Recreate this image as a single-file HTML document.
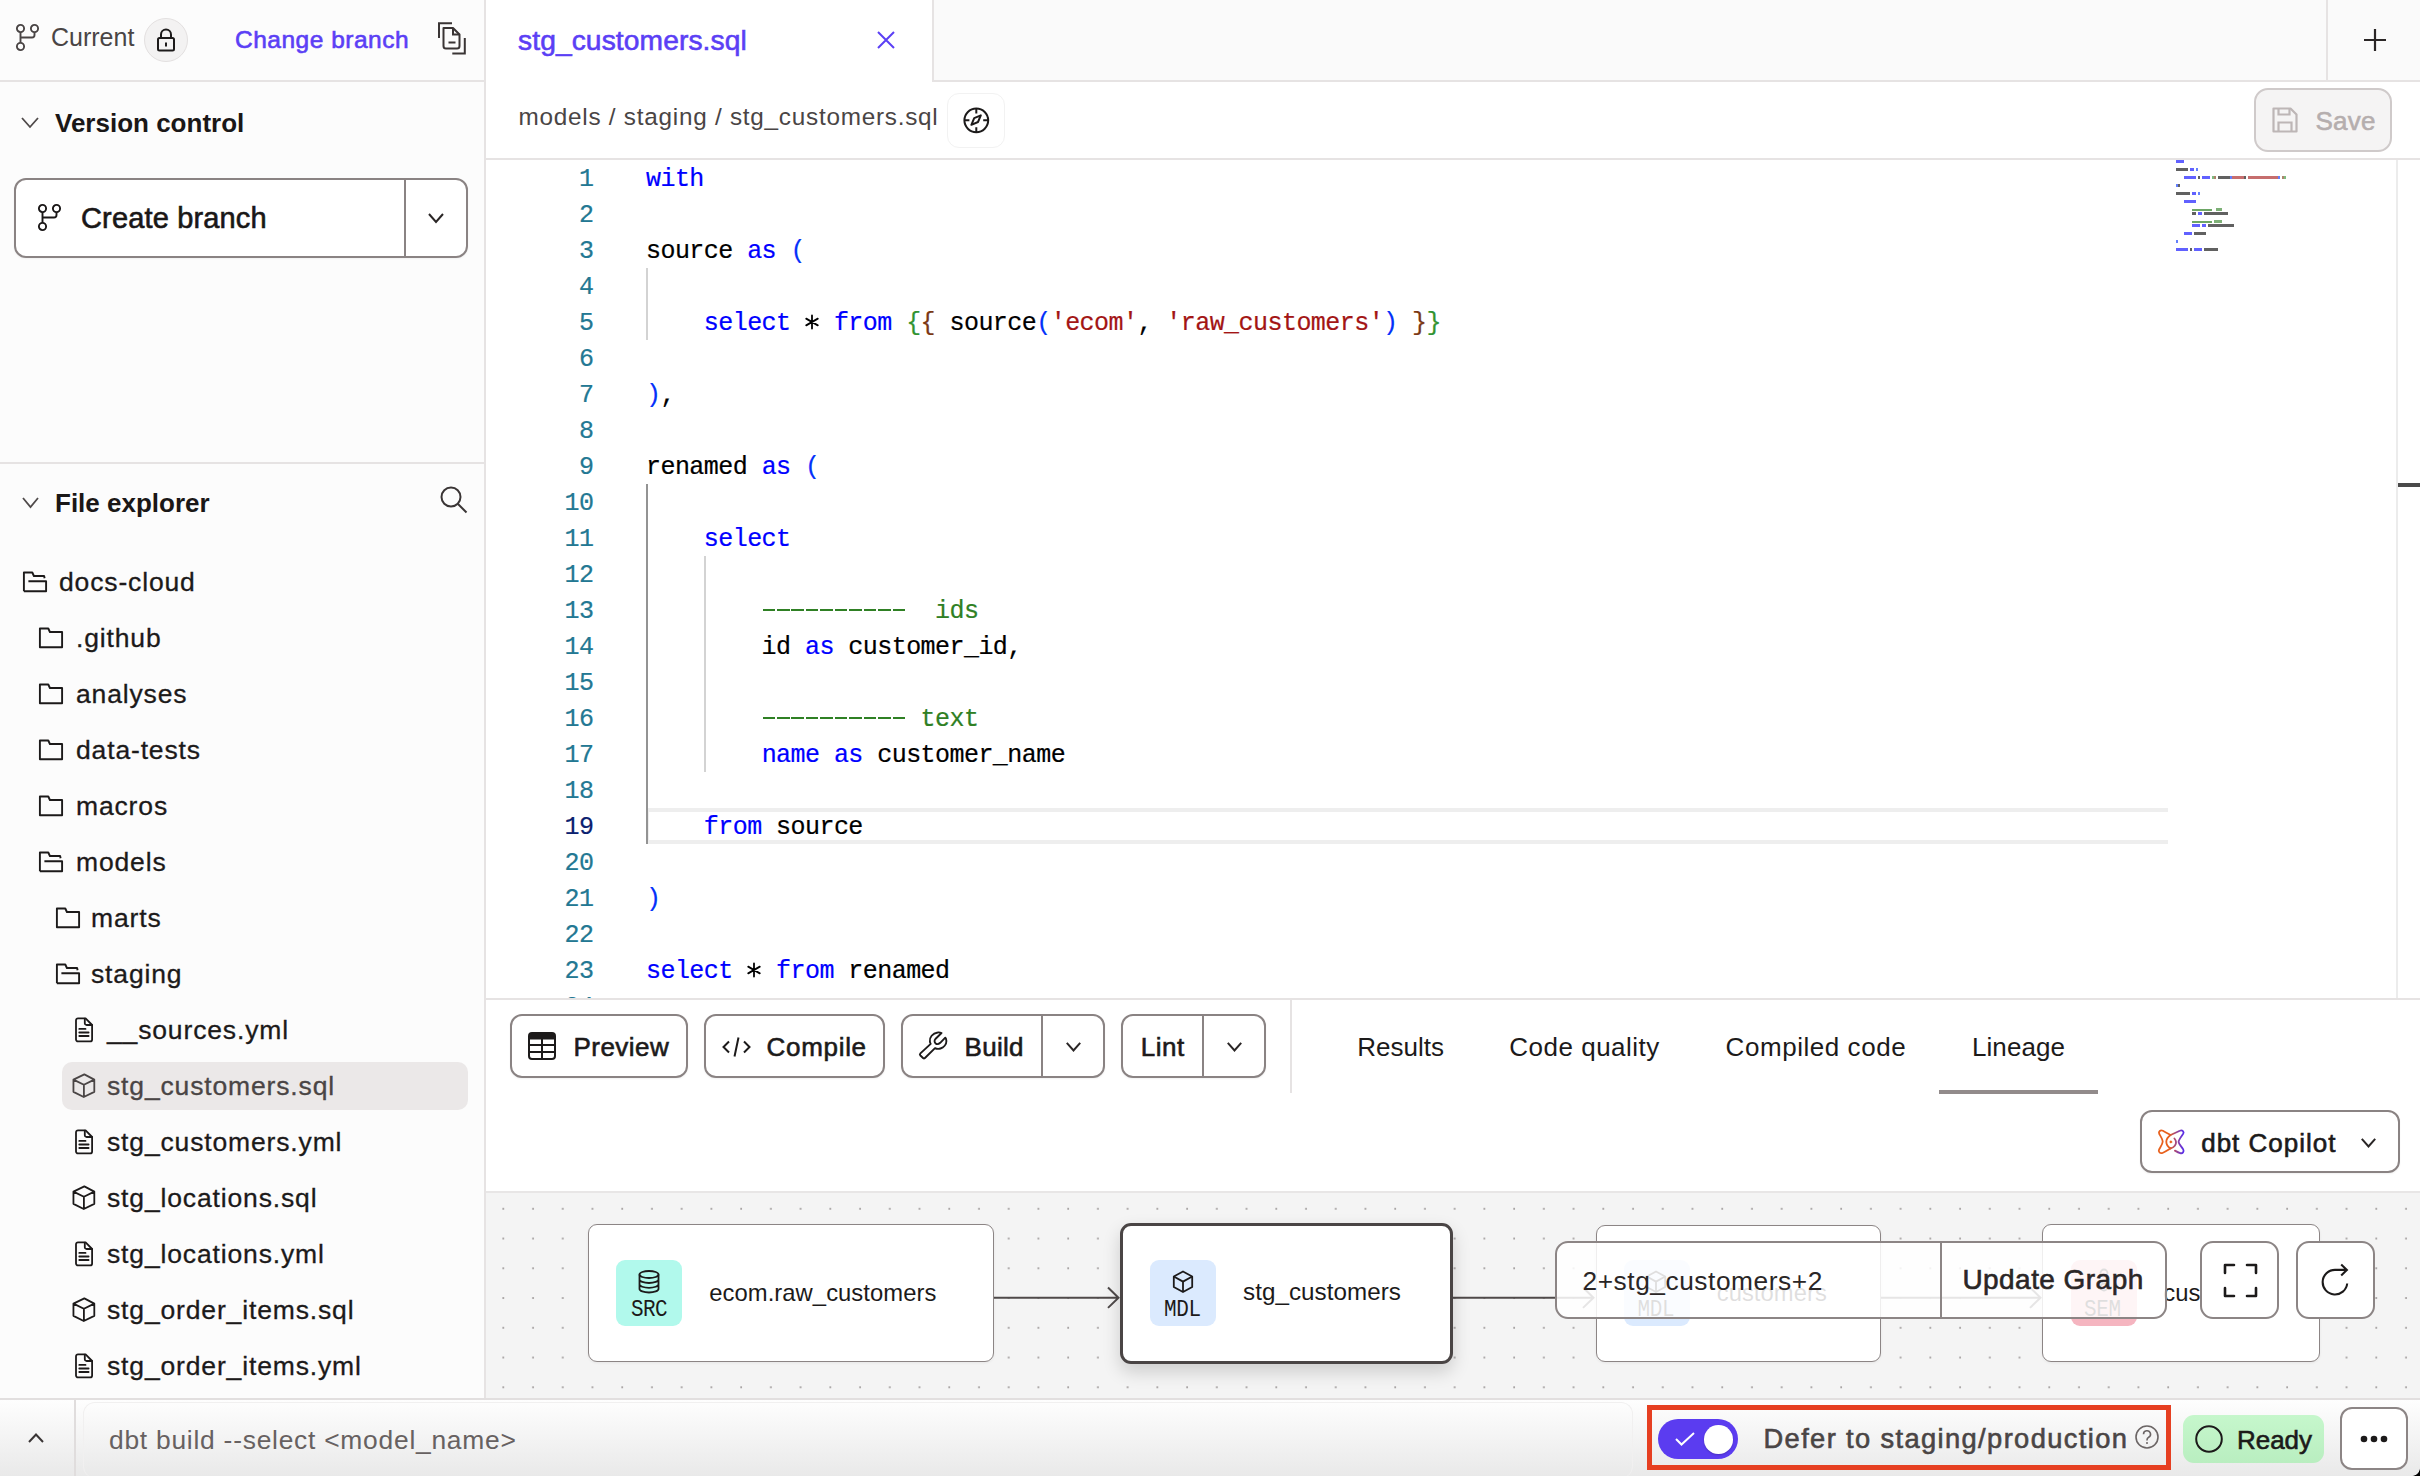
<!DOCTYPE html>
<html><head><meta charset="utf-8">
<style>
*{box-sizing:border-box;margin:0;padding:0}
html,body{width:2420px;height:1476px;overflow:hidden;background:#fff;font-family:"Liberation Sans",sans-serif;color:#1c1a1a}
.a{position:absolute}
.t{position:absolute;white-space:nowrap;line-height:1}
.med{-webkit-text-stroke:0.6px currentColor}
svg{position:absolute;overflow:visible}
.mono{font-family:"Liberation Mono",monospace}
</style></head><body>
<div class="a" style="left:0px;top:0px;width:484px;height:1398px;background:#fcfcfc"></div>
<div class="a" style="left:484px;top:0px;width:2px;height:1398px;background:#e6e3e3"></div>
<div class="a" style="left:0px;top:80px;width:484px;height:2px;background:#e6e3e3"></div>
<svg style="left:16px;top:24px;" width="24" height="28" viewBox="0 0 24 28" fill="none"><circle cx="4.5" cy="4.5" r="3.6" stroke="#4a4545" stroke-width="1.9"/><circle cx="18.5" cy="4.5" r="3.6" stroke="#4a4545" stroke-width="1.9"/><circle cx="4.5" cy="22.5" r="3.6" stroke="#4a4545" stroke-width="1.9"/><path d="M4.5 8.1V18.9M18.5 8.1V11a2.5 2.5 0 0 1-2.5 2.5H4.5" stroke="#4a4545" stroke-width="1.9"/></svg>
<div class="t" style="left:51.00px;top:25.34px;font-size:25px;color:#4a4545;">Current</div>
<div class="a" style="left:144px;top:18px;width:44px;height:44px;border-radius:50%;background:#f3f2f2;border:1.5px solid #e3e0e0"></div>
<svg style="left:157px;top:28px;" width="18" height="24" viewBox="0 0 18 24" fill="none"><path d="M4 10V6.5a5 5 0 0 1 10 0V10" stroke="#1c1a1a" stroke-width="2"/><rect x="1" y="10" width="16" height="12.5" rx="1.5" stroke="#1c1a1a" stroke-width="2"/><path d="M9 14.5v4" stroke="#1c1a1a" stroke-width="2"/></svg>
<div class="t med" style="left:235.00px;top:28.26px;font-size:24.5px;color:#5b3ff5;letter-spacing:0.5px;">Change branch</div>
<svg style="left:438px;top:22px;" width="30" height="34" viewBox="0 0 30 34" fill="none"><path d="M1 16V1.2h13" stroke="#3a3535" stroke-width="2"/><path d="M5.5 6h9.5l6.5 6.5V24a2.5 2.5 0 0 1-2.5 2.5H8a2.5 2.5 0 0 1-2.5-2.5z" stroke="#3a3535" stroke-width="2" stroke-linejoin="round"/><path d="M15 6v6.5h6.5" stroke="#3a3535" stroke-width="2"/><path d="M10.5 20.5h7" stroke="#3a3535" stroke-width="2"/><path d="M26.8 16v15.4H14.3" stroke="#3a3535" stroke-width="2"/></svg>
<svg style="left:21px;top:117px;" width="18" height="12" viewBox="0 0 18 12" fill="none"><path d="M1 1l8 9 8-9" stroke="#4f4a4a" stroke-width="1.8"/></svg>
<div class="t" style="left:55.00px;top:110.19px;font-size:26px;color:#1a1717;font-weight:bold;">Version control</div>
<div class="a" style="left:14px;top:178px;width:454px;height:80px;border:2px solid #8a8383;border-radius:12px;background:#fff;box-shadow:0 1px 2px rgba(0,0,0,0.05)"></div>
<div class="a" style="left:404px;top:179px;width:2px;height:78px;background:#8a8383"></div>
<svg style="left:38px;top:204px;" width="25" height="28" viewBox="0 0 25 28" fill="none"><circle cx="4.5" cy="4.5" r="3.6" stroke="#1a1717" stroke-width="1.9"/><circle cx="18.5" cy="4.5" r="3.6" stroke="#1a1717" stroke-width="1.9"/><circle cx="4.5" cy="22.5" r="3.6" stroke="#1a1717" stroke-width="1.9"/><path d="M4.5 8.1V18.9M18.5 8.1V11a2.5 2.5 0 0 1-2.5 2.5H4.5" stroke="#1a1717" stroke-width="1.9"/></svg>
<div class="t med" style="left:81.00px;top:203.65px;font-size:29px;color:#1a1717;letter-spacing:0.15px;">Create branch</div>
<svg style="left:428px;top:213px;" width="16" height="10" viewBox="0 0 16 10" fill="none"><path d="M1 1l7 8 7-8" stroke="#2a2626" stroke-width="2"/></svg>
<div class="a" style="left:0px;top:462px;width:484px;height:2px;background:#e6e3e3"></div>
<svg style="left:22px;top:497px;" width="17" height="11" viewBox="0 0 17 11" fill="none"><path d="M1 1l7.5 9 7.5-9" stroke="#4f4a4a" stroke-width="1.8"/></svg>
<div class="t" style="left:55.00px;top:490.39px;font-size:26px;color:#1a1717;font-weight:bold;">File explorer</div>
<svg style="left:440px;top:486px;" width="28" height="28" viewBox="0 0 28 28" fill="none"><circle cx="11" cy="11" r="9.5" stroke="#3a3535" stroke-width="2"/><path d="M18 18l8.5 8.5" stroke="#3a3535" stroke-width="2"/></svg>
<svg style="left:23px;top:571px;" width="24" height="22" viewBox="0 0 24 22" fill="none"><path d="M0.9 20.3V1.5H9.3L10.9 5H21.1L21.6 7.3" stroke="#1c1a1a" stroke-width="1.9" stroke-linejoin="round"/><path d="M5.4 10.2H23.1V20.3H0.9" stroke="#1c1a1a" stroke-width="1.9" stroke-linejoin="round"/></svg>
<div class="t" style="left:59.00px;top:569.37px;font-size:26.5px;color:#1c1a1a;letter-spacing:0.85px;-webkit-text-stroke:0.3px currentColor;">docs-cloud</div>
<svg style="left:39px;top:627px;" width="24" height="22" viewBox="0 0 24 22" fill="none"><path d="M0.9 1.5H9.3L10.9 5H23.1V20.3H0.9Z" stroke="#1c1a1a" stroke-width="1.9" stroke-linejoin="round"/></svg>
<div class="t" style="left:76.00px;top:625.37px;font-size:26.5px;color:#1c1a1a;letter-spacing:0.85px;-webkit-text-stroke:0.3px currentColor;">.github</div>
<svg style="left:39px;top:683px;" width="24" height="22" viewBox="0 0 24 22" fill="none"><path d="M0.9 1.5H9.3L10.9 5H23.1V20.3H0.9Z" stroke="#1c1a1a" stroke-width="1.9" stroke-linejoin="round"/></svg>
<div class="t" style="left:76.00px;top:681.37px;font-size:26.5px;color:#1c1a1a;letter-spacing:0.85px;-webkit-text-stroke:0.3px currentColor;">analyses</div>
<svg style="left:39px;top:739px;" width="24" height="22" viewBox="0 0 24 22" fill="none"><path d="M0.9 1.5H9.3L10.9 5H23.1V20.3H0.9Z" stroke="#1c1a1a" stroke-width="1.9" stroke-linejoin="round"/></svg>
<div class="t" style="left:76.00px;top:737.37px;font-size:26.5px;color:#1c1a1a;letter-spacing:0.85px;-webkit-text-stroke:0.3px currentColor;">data-tests</div>
<svg style="left:39px;top:795px;" width="24" height="22" viewBox="0 0 24 22" fill="none"><path d="M0.9 1.5H9.3L10.9 5H23.1V20.3H0.9Z" stroke="#1c1a1a" stroke-width="1.9" stroke-linejoin="round"/></svg>
<div class="t" style="left:76.00px;top:793.37px;font-size:26.5px;color:#1c1a1a;letter-spacing:0.85px;-webkit-text-stroke:0.3px currentColor;">macros</div>
<svg style="left:39px;top:851px;" width="24" height="22" viewBox="0 0 24 22" fill="none"><path d="M0.9 20.3V1.5H9.3L10.9 5H21.1L21.6 7.3" stroke="#1c1a1a" stroke-width="1.9" stroke-linejoin="round"/><path d="M5.4 10.2H23.1V20.3H0.9" stroke="#1c1a1a" stroke-width="1.9" stroke-linejoin="round"/></svg>
<div class="t" style="left:76.00px;top:849.37px;font-size:26.5px;color:#1c1a1a;letter-spacing:0.85px;-webkit-text-stroke:0.3px currentColor;">models</div>
<svg style="left:56px;top:907px;" width="24" height="22" viewBox="0 0 24 22" fill="none"><path d="M0.9 1.5H9.3L10.9 5H23.1V20.3H0.9Z" stroke="#1c1a1a" stroke-width="1.9" stroke-linejoin="round"/></svg>
<div class="t" style="left:91.00px;top:905.37px;font-size:26.5px;color:#1c1a1a;letter-spacing:0.85px;-webkit-text-stroke:0.3px currentColor;">marts</div>
<svg style="left:56px;top:963px;" width="24" height="22" viewBox="0 0 24 22" fill="none"><path d="M0.9 20.3V1.5H9.3L10.9 5H21.1L21.6 7.3" stroke="#1c1a1a" stroke-width="1.9" stroke-linejoin="round"/><path d="M5.4 10.2H23.1V20.3H0.9" stroke="#1c1a1a" stroke-width="1.9" stroke-linejoin="round"/></svg>
<div class="t" style="left:91.00px;top:961.37px;font-size:26.5px;color:#1c1a1a;letter-spacing:0.85px;-webkit-text-stroke:0.3px currentColor;">staging</div>
<svg style="left:75px;top:1017px;" width="19" height="26" viewBox="0 0 19 26" fill="none"><path d="M3 1.4h7.6l6.5 6.6v14.4a2 2 0 0 1-2 2H3a2 2 0 0 1-2-2V3.4a2 2 0 0 1 2-2z" stroke="#1c1a1a" stroke-width="1.8" stroke-linejoin="round"/><path d="M9.8 1.6v4.6a1.8 1.8 0 0 0 1.8 1.8h5.4M4.3 11.9h6.2M4.3 15.5h9.3M4.3 19h9.3" stroke="#1c1a1a" stroke-width="1.8" stroke-linecap="round"/></svg>
<div class="t" style="left:107.00px;top:1017.37px;font-size:26.5px;color:#1c1a1a;letter-spacing:0.85px;-webkit-text-stroke:0.3px currentColor;">__sources.yml</div>
<div class="a" style="left:62px;top:1062px;width:406px;height:48px;background:#ebe8e8;border-radius:10px"></div>
<svg style="left:72px;top:1073px;" width="24" height="26" viewBox="0 0 24 26" fill="none"><path d="M12.35 1.4L22.3 6.65V18.85L11.75 24L1.45 18.85V6.65Z M1.45 6.65L11.9 11.8L22.3 6.65 M11.9 11.8V24" stroke="#4a4545" stroke-width="1.8" stroke-linejoin="round"/></svg>
<div class="t" style="left:107.00px;top:1073.37px;font-size:26.5px;color:#4a4545;letter-spacing:0.85px;-webkit-text-stroke:0.3px currentColor;">stg_customers.sql</div>
<svg style="left:75px;top:1129px;" width="19" height="26" viewBox="0 0 19 26" fill="none"><path d="M3 1.4h7.6l6.5 6.6v14.4a2 2 0 0 1-2 2H3a2 2 0 0 1-2-2V3.4a2 2 0 0 1 2-2z" stroke="#1c1a1a" stroke-width="1.8" stroke-linejoin="round"/><path d="M9.8 1.6v4.6a1.8 1.8 0 0 0 1.8 1.8h5.4M4.3 11.9h6.2M4.3 15.5h9.3M4.3 19h9.3" stroke="#1c1a1a" stroke-width="1.8" stroke-linecap="round"/></svg>
<div class="t" style="left:107.00px;top:1129.37px;font-size:26.5px;color:#1c1a1a;letter-spacing:0.85px;-webkit-text-stroke:0.3px currentColor;">stg_customers.yml</div>
<svg style="left:72px;top:1185px;" width="24" height="26" viewBox="0 0 24 26" fill="none"><path d="M12.35 1.4L22.3 6.65V18.85L11.75 24L1.45 18.85V6.65Z M1.45 6.65L11.9 11.8L22.3 6.65 M11.9 11.8V24" stroke="#1c1a1a" stroke-width="1.8" stroke-linejoin="round"/></svg>
<div class="t" style="left:107.00px;top:1185.37px;font-size:26.5px;color:#1c1a1a;letter-spacing:0.85px;-webkit-text-stroke:0.3px currentColor;">stg_locations.sql</div>
<svg style="left:75px;top:1241px;" width="19" height="26" viewBox="0 0 19 26" fill="none"><path d="M3 1.4h7.6l6.5 6.6v14.4a2 2 0 0 1-2 2H3a2 2 0 0 1-2-2V3.4a2 2 0 0 1 2-2z" stroke="#1c1a1a" stroke-width="1.8" stroke-linejoin="round"/><path d="M9.8 1.6v4.6a1.8 1.8 0 0 0 1.8 1.8h5.4M4.3 11.9h6.2M4.3 15.5h9.3M4.3 19h9.3" stroke="#1c1a1a" stroke-width="1.8" stroke-linecap="round"/></svg>
<div class="t" style="left:107.00px;top:1241.37px;font-size:26.5px;color:#1c1a1a;letter-spacing:0.85px;-webkit-text-stroke:0.3px currentColor;">stg_locations.yml</div>
<svg style="left:72px;top:1297px;" width="24" height="26" viewBox="0 0 24 26" fill="none"><path d="M12.35 1.4L22.3 6.65V18.85L11.75 24L1.45 18.85V6.65Z M1.45 6.65L11.9 11.8L22.3 6.65 M11.9 11.8V24" stroke="#1c1a1a" stroke-width="1.8" stroke-linejoin="round"/></svg>
<div class="t" style="left:107.00px;top:1297.37px;font-size:26.5px;color:#1c1a1a;letter-spacing:0.85px;-webkit-text-stroke:0.3px currentColor;">stg_order_items.sql</div>
<svg style="left:75px;top:1353px;" width="19" height="26" viewBox="0 0 19 26" fill="none"><path d="M3 1.4h7.6l6.5 6.6v14.4a2 2 0 0 1-2 2H3a2 2 0 0 1-2-2V3.4a2 2 0 0 1 2-2z" stroke="#1c1a1a" stroke-width="1.8" stroke-linejoin="round"/><path d="M9.8 1.6v4.6a1.8 1.8 0 0 0 1.8 1.8h5.4M4.3 11.9h6.2M4.3 15.5h9.3M4.3 19h9.3" stroke="#1c1a1a" stroke-width="1.8" stroke-linecap="round"/></svg>
<div class="t" style="left:107.00px;top:1353.37px;font-size:26.5px;color:#1c1a1a;letter-spacing:0.85px;-webkit-text-stroke:0.3px currentColor;">stg_order_items.yml</div>
<div class="a" style="left:486px;top:0px;width:1934px;height:82px;background:#fafafa"></div>
<div class="a" style="left:486px;top:80px;width:1934px;height:2px;background:#e6e3e3"></div>
<div class="a" style="left:486px;top:0px;width:446px;height:82px;background:#fff"></div>
<div class="a" style="left:932px;top:0px;width:2px;height:82px;background:#e6e3e3"></div>
<div class="t med" style="left:518.00px;top:25.63px;font-size:28.2px;color:#5b3ff5;letter-spacing:0.1px;">stg_customers.sql</div>
<svg style="left:877px;top:31px;" width="18" height="18" viewBox="0 0 18 18" fill="none"><path d="M1 1l16 16M17 1L1 17" stroke="#5b3ff5" stroke-width="2"/></svg>
<div class="a" style="left:2326px;top:0px;width:2px;height:82px;background:#e6e3e3"></div>
<svg style="left:2363px;top:28px;" width="24" height="24" viewBox="0 0 24 24" fill="none"><path d="M12 1v22M1 12h22" stroke="#2a2626" stroke-width="2.2"/></svg>
<div class="a" style="left:486px;top:82px;width:1934px;height:76px;background:#fff"></div>
<div class="a" style="left:486px;top:158px;width:1934px;height:2px;background:#e6e3e3"></div>
<div class="t" style="left:518.50px;top:105.43px;font-size:24.3px;color:#4a4545;letter-spacing:0.75px;">models / staging / stg_customers.sql</div>
<div class="a" style="left:947px;top:93px;width:58px;height:55px;border:1px solid #f2f2f2;border-radius:12px;background:#fff"></div>
<svg style="left:962.5px;top:106.5px;" width="27" height="27" viewBox="0 0 27 27" fill="none"><circle cx="13.3" cy="13.35" r="11.9" stroke="#1c1a1a" stroke-width="2"/><path d="M13.3 1.5v5M13.3 20.2v5M1.4 13.35h5M20.2 13.35h5" stroke="#1c1a1a" stroke-width="2"/><path d="M17.8 8.4l-2.8 6.6-6.6 2.8 2.8-6.6z" stroke="#1c1a1a" stroke-width="2" stroke-linejoin="round"/></svg>
<div class="a" style="left:2254px;top:88px;width:138px;height:64px;background:#f5f4f4;border:2px solid #cfcaca;border-radius:14px"></div>
<svg style="left:2272px;top:107px;" width="26" height="26" viewBox="0 0 26 26" fill="none"><path d="M1.5 1.5h17l6 6v17h-23z" stroke="#bdb6b6" stroke-width="2.2" stroke-linejoin="round"/><path d="M6.5 1.5v6h11v-6M6.5 24.5v-9h13v9" stroke="#bdb6b6" stroke-width="2.2"/></svg>
<div class="t med" style="left:2315.50px;top:107.99px;font-size:26px;color:#b5aeae;letter-spacing:0.2px;">Save</div>
<div class="a" style="left:486px;top:160px;width:1934px;height:838px;background:#fff;overflow:hidden"></div>
<div class="a" style="left:486px;top:998px;width:1934px;height:2px;background:#e6e3e3"></div>
<div class="a" style="left:646px;top:808px;width:1522px;height:36px;border:4px solid #eeeeee;border-left-width:3px;border-right:none"></div>
<div class="a" style="left:646px;top:268px;width:2px;height:72px;background:#d3d3d3"></div>
<div class="a" style="left:704px;top:556px;width:2px;height:216px;background:#d3d3d3"></div>
<div class="a" style="left:646px;top:484px;width:2px;height:360px;background:#939393"></div>
<div class="a" style="left:0;top:0;width:2420px;height:998px;overflow:hidden"><div class="t" style="left:579.05px;top:166.84px;font-size:25px;color:#237893;letter-spacing:-0.55px;font-family:'Liberation Mono',monospace;-webkit-text-stroke:0.2px currentColor;">1</div>
<div class="t" style="left:646.00px;top:166.84px;font-size:25px;color:#000;letter-spacing:-0.55px;font-family:'Liberation Mono',monospace;-webkit-text-stroke:0.2px currentColor;"><span style="color:#0000ff">with</span></div>
<div class="t" style="left:579.05px;top:202.84px;font-size:25px;color:#237893;letter-spacing:-0.55px;font-family:'Liberation Mono',monospace;-webkit-text-stroke:0.2px currentColor;">2</div>
<div class="t" style="left:579.05px;top:238.84px;font-size:25px;color:#237893;letter-spacing:-0.55px;font-family:'Liberation Mono',monospace;-webkit-text-stroke:0.2px currentColor;">3</div>
<div class="t" style="left:646.00px;top:238.84px;font-size:25px;color:#000;letter-spacing:-0.55px;font-family:'Liberation Mono',monospace;-webkit-text-stroke:0.2px currentColor;"><span style="color:#000000">source&nbsp;</span><span style="color:#0000ff">as</span><span style="color:#000000">&nbsp;</span><span style="color:#0431fa">(</span></div>
<div class="t" style="left:579.05px;top:274.84px;font-size:25px;color:#237893;letter-spacing:-0.55px;font-family:'Liberation Mono',monospace;-webkit-text-stroke:0.2px currentColor;">4</div>
<div class="t" style="left:579.05px;top:310.84px;font-size:25px;color:#237893;letter-spacing:-0.55px;font-family:'Liberation Mono',monospace;-webkit-text-stroke:0.2px currentColor;">5</div>
<div class="t" style="left:646.00px;top:310.84px;font-size:25px;color:#000;letter-spacing:-0.55px;font-family:'Liberation Mono',monospace;-webkit-text-stroke:0.2px currentColor;"><span style="color:#000000">&nbsp;&nbsp;&nbsp;&nbsp;</span><span style="color:#0000ff">select</span><span style="color:#000000">&nbsp;&nbsp;&nbsp;</span><span style="color:#0000ff">from</span><span style="color:#000000">&nbsp;</span><span style="color:#319331">{</span><span style="color:#7b3814">{</span><span style="color:#000000">&nbsp;source</span><span style="color:#0431fa">(</span><span style="color:#a31515">'ecom'</span><span style="color:#000000">,&nbsp;</span><span style="color:#a31515">'raw_customers'</span><span style="color:#0431fa">)</span><span style="color:#000000">&nbsp;</span><span style="color:#7b3814">}</span><span style="color:#319331">}</span></div>
<div class="t" style="left:579.05px;top:346.84px;font-size:25px;color:#237893;letter-spacing:-0.55px;font-family:'Liberation Mono',monospace;-webkit-text-stroke:0.2px currentColor;">6</div>
<div class="t" style="left:579.05px;top:382.84px;font-size:25px;color:#237893;letter-spacing:-0.55px;font-family:'Liberation Mono',monospace;-webkit-text-stroke:0.2px currentColor;">7</div>
<div class="t" style="left:646.00px;top:382.84px;font-size:25px;color:#000;letter-spacing:-0.55px;font-family:'Liberation Mono',monospace;-webkit-text-stroke:0.2px currentColor;"><span style="color:#0431fa">)</span><span style="color:#000000">,</span></div>
<div class="t" style="left:579.05px;top:418.84px;font-size:25px;color:#237893;letter-spacing:-0.55px;font-family:'Liberation Mono',monospace;-webkit-text-stroke:0.2px currentColor;">8</div>
<div class="t" style="left:579.05px;top:454.84px;font-size:25px;color:#237893;letter-spacing:-0.55px;font-family:'Liberation Mono',monospace;-webkit-text-stroke:0.2px currentColor;">9</div>
<div class="t" style="left:646.00px;top:454.84px;font-size:25px;color:#000;letter-spacing:-0.55px;font-family:'Liberation Mono',monospace;-webkit-text-stroke:0.2px currentColor;"><span style="color:#000000">renamed&nbsp;</span><span style="color:#0000ff">as</span><span style="color:#000000">&nbsp;</span><span style="color:#0431fa">(</span></div>
<div class="t" style="left:564.60px;top:490.84px;font-size:25px;color:#237893;letter-spacing:-0.55px;font-family:'Liberation Mono',monospace;-webkit-text-stroke:0.2px currentColor;">10</div>
<div class="t" style="left:564.60px;top:526.84px;font-size:25px;color:#237893;letter-spacing:-0.55px;font-family:'Liberation Mono',monospace;-webkit-text-stroke:0.2px currentColor;">11</div>
<div class="t" style="left:646.00px;top:526.84px;font-size:25px;color:#000;letter-spacing:-0.55px;font-family:'Liberation Mono',monospace;-webkit-text-stroke:0.2px currentColor;"><span style="color:#000000">&nbsp;&nbsp;&nbsp;&nbsp;</span><span style="color:#0000ff">select</span></div>
<div class="t" style="left:564.60px;top:562.84px;font-size:25px;color:#237893;letter-spacing:-0.55px;font-family:'Liberation Mono',monospace;-webkit-text-stroke:0.2px currentColor;">12</div>
<div class="t" style="left:564.60px;top:598.84px;font-size:25px;color:#237893;letter-spacing:-0.55px;font-family:'Liberation Mono',monospace;-webkit-text-stroke:0.2px currentColor;">13</div>
<div class="t" style="left:646.00px;top:598.84px;font-size:25px;color:#000;letter-spacing:-0.55px;font-family:'Liberation Mono',monospace;-webkit-text-stroke:0.2px currentColor;"><span style="color:#000000">&nbsp;&nbsp;&nbsp;&nbsp;&nbsp;&nbsp;&nbsp;&nbsp;</span><span style="color:#2f8024">&nbsp;&nbsp;&nbsp;&nbsp;&nbsp;&nbsp;&nbsp;&nbsp;&nbsp;&nbsp;&nbsp;&nbsp;ids</span></div>
<div class="t" style="left:564.60px;top:634.84px;font-size:25px;color:#237893;letter-spacing:-0.55px;font-family:'Liberation Mono',monospace;-webkit-text-stroke:0.2px currentColor;">14</div>
<div class="t" style="left:646.00px;top:634.84px;font-size:25px;color:#000;letter-spacing:-0.55px;font-family:'Liberation Mono',monospace;-webkit-text-stroke:0.2px currentColor;"><span style="color:#000000">&nbsp;&nbsp;&nbsp;&nbsp;&nbsp;&nbsp;&nbsp;&nbsp;id&nbsp;</span><span style="color:#0000ff">as</span><span style="color:#000000">&nbsp;customer_id,</span></div>
<div class="t" style="left:564.60px;top:670.84px;font-size:25px;color:#237893;letter-spacing:-0.55px;font-family:'Liberation Mono',monospace;-webkit-text-stroke:0.2px currentColor;">15</div>
<div class="t" style="left:564.60px;top:706.84px;font-size:25px;color:#237893;letter-spacing:-0.55px;font-family:'Liberation Mono',monospace;-webkit-text-stroke:0.2px currentColor;">16</div>
<div class="t" style="left:646.00px;top:706.84px;font-size:25px;color:#000;letter-spacing:-0.55px;font-family:'Liberation Mono',monospace;-webkit-text-stroke:0.2px currentColor;"><span style="color:#000000">&nbsp;&nbsp;&nbsp;&nbsp;&nbsp;&nbsp;&nbsp;&nbsp;</span><span style="color:#2f8024">&nbsp;&nbsp;&nbsp;&nbsp;&nbsp;&nbsp;&nbsp;&nbsp;&nbsp;&nbsp;&nbsp;text</span></div>
<div class="t" style="left:564.60px;top:742.84px;font-size:25px;color:#237893;letter-spacing:-0.55px;font-family:'Liberation Mono',monospace;-webkit-text-stroke:0.2px currentColor;">17</div>
<div class="t" style="left:646.00px;top:742.84px;font-size:25px;color:#000;letter-spacing:-0.55px;font-family:'Liberation Mono',monospace;-webkit-text-stroke:0.2px currentColor;"><span style="color:#000000">&nbsp;&nbsp;&nbsp;&nbsp;&nbsp;&nbsp;&nbsp;&nbsp;</span><span style="color:#0000ff">name</span><span style="color:#000000">&nbsp;</span><span style="color:#0000ff">as</span><span style="color:#000000">&nbsp;customer_name</span></div>
<div class="t" style="left:564.60px;top:778.84px;font-size:25px;color:#237893;letter-spacing:-0.55px;font-family:'Liberation Mono',monospace;-webkit-text-stroke:0.2px currentColor;">18</div>
<div class="t" style="left:564.60px;top:814.84px;font-size:25px;color:#0b216f;letter-spacing:-0.55px;font-family:'Liberation Mono',monospace;-webkit-text-stroke:0.2px currentColor;">19</div>
<div class="t" style="left:646.00px;top:814.84px;font-size:25px;color:#000;letter-spacing:-0.55px;font-family:'Liberation Mono',monospace;-webkit-text-stroke:0.2px currentColor;"><span style="color:#000000">&nbsp;&nbsp;&nbsp;&nbsp;</span><span style="color:#0000ff">from</span><span style="color:#000000">&nbsp;source</span></div>
<div class="t" style="left:564.60px;top:850.84px;font-size:25px;color:#237893;letter-spacing:-0.55px;font-family:'Liberation Mono',monospace;-webkit-text-stroke:0.2px currentColor;">20</div>
<div class="t" style="left:564.60px;top:886.84px;font-size:25px;color:#237893;letter-spacing:-0.55px;font-family:'Liberation Mono',monospace;-webkit-text-stroke:0.2px currentColor;">21</div>
<div class="t" style="left:646.00px;top:886.84px;font-size:25px;color:#000;letter-spacing:-0.55px;font-family:'Liberation Mono',monospace;-webkit-text-stroke:0.2px currentColor;"><span style="color:#0431fa">)</span></div>
<div class="t" style="left:564.60px;top:922.84px;font-size:25px;color:#237893;letter-spacing:-0.55px;font-family:'Liberation Mono',monospace;-webkit-text-stroke:0.2px currentColor;">22</div>
<div class="t" style="left:564.60px;top:958.84px;font-size:25px;color:#237893;letter-spacing:-0.55px;font-family:'Liberation Mono',monospace;-webkit-text-stroke:0.2px currentColor;">23</div>
<div class="t" style="left:646.00px;top:958.84px;font-size:25px;color:#000;letter-spacing:-0.55px;font-family:'Liberation Mono',monospace;-webkit-text-stroke:0.2px currentColor;"><span style="color:#0000ff">select</span><span style="color:#000000">&nbsp;&nbsp;&nbsp;</span><span style="color:#0000ff">from</span><span style="color:#000000">&nbsp;renamed</span></div>
<div class="t" style="left:564.60px;top:994.84px;font-size:25px;color:#237893;letter-spacing:-0.55px;font-family:'Liberation Mono',monospace;-webkit-text-stroke:0.2px currentColor;">24</div>
</div>
<div class="a" style="left:762.5px;top:608.8px;width:12.6px;height:2.6px;background:#2f8024"></div>
<div class="a" style="left:776.95px;top:608.8px;width:12.6px;height:2.6px;background:#2f8024"></div>
<div class="a" style="left:791.4px;top:608.8px;width:12.6px;height:2.6px;background:#2f8024"></div>
<div class="a" style="left:805.85px;top:608.8px;width:12.6px;height:2.6px;background:#2f8024"></div>
<div class="a" style="left:820.3px;top:608.8px;width:12.6px;height:2.6px;background:#2f8024"></div>
<div class="a" style="left:834.75px;top:608.8px;width:12.6px;height:2.6px;background:#2f8024"></div>
<div class="a" style="left:849.2px;top:608.8px;width:12.6px;height:2.6px;background:#2f8024"></div>
<div class="a" style="left:863.65px;top:608.8px;width:12.6px;height:2.6px;background:#2f8024"></div>
<div class="a" style="left:878.1px;top:608.8px;width:12.6px;height:2.6px;background:#2f8024"></div>
<div class="a" style="left:892.55px;top:608.8px;width:12.6px;height:2.6px;background:#2f8024"></div>
<div class="a" style="left:762.5px;top:716.8px;width:12.6px;height:2.6px;background:#2f8024"></div>
<div class="a" style="left:776.95px;top:716.8px;width:12.6px;height:2.6px;background:#2f8024"></div>
<div class="a" style="left:791.4px;top:716.8px;width:12.6px;height:2.6px;background:#2f8024"></div>
<div class="a" style="left:805.85px;top:716.8px;width:12.6px;height:2.6px;background:#2f8024"></div>
<div class="a" style="left:820.3px;top:716.8px;width:12.6px;height:2.6px;background:#2f8024"></div>
<div class="a" style="left:834.75px;top:716.8px;width:12.6px;height:2.6px;background:#2f8024"></div>
<div class="a" style="left:849.2px;top:716.8px;width:12.6px;height:2.6px;background:#2f8024"></div>
<div class="a" style="left:863.65px;top:716.8px;width:12.6px;height:2.6px;background:#2f8024"></div>
<div class="a" style="left:878.1px;top:716.8px;width:12.6px;height:2.6px;background:#2f8024"></div>
<div class="a" style="left:892.55px;top:716.8px;width:12.6px;height:2.6px;background:#2f8024"></div>
<svg style="left:804.2px;top:314.2px;" width="16" height="16" viewBox="-8 -8 16 16" fill="none"><path d="M0 -6.6V6.6M-5.8 -3.35L5.8 3.35M-5.8 3.35L5.8 -3.35" stroke="#000" stroke-width="1.8" stroke-linecap="round"/></svg>
<svg style="left:746.4px;top:962.2px;" width="16" height="16" viewBox="-8 -8 16 16" fill="none"><path d="M0 -6.6V6.6M-5.8 -3.35L5.8 3.35M-5.8 3.35L5.8 -3.35" stroke="#000" stroke-width="1.8" stroke-linecap="round"/></svg>
<div class="a" style="left:2396px;top:160px;width:2px;height:838px;background:#ececec"></div>
<div class="a" style="left:2398px;top:483px;width:22px;height:4px;background:#4a4a4a"></div>
<div class="a" style="left:2176px;top:160px;width:8px;height:3.2px;background:#0000ff;opacity:0.62"></div><div class="a" style="left:2176px;top:168px;width:12px;height:3.2px;background:#000000;opacity:0.62"></div><div class="a" style="left:2190px;top:168px;width:4px;height:3.2px;background:#0000ff;opacity:0.62"></div><div class="a" style="left:2196px;top:168px;width:2px;height:3.2px;background:#0431fa;opacity:0.62"></div><div class="a" style="left:2184px;top:176px;width:12px;height:3.2px;background:#0000ff;opacity:0.62"></div><div class="a" style="left:2198px;top:176px;width:2px;height:3.2px;background:#000000;opacity:0.62"></div><div class="a" style="left:2202px;top:176px;width:8px;height:3.2px;background:#0000ff;opacity:0.62"></div><div class="a" style="left:2212px;top:176px;width:2px;height:3.2px;background:#319331;opacity:0.62"></div><div class="a" style="left:2214px;top:176px;width:2px;height:3.2px;background:#7b3814;opacity:0.62"></div><div class="a" style="left:2218px;top:176px;width:12px;height:3.2px;background:#000000;opacity:0.62"></div><div class="a" style="left:2230px;top:176px;width:2px;height:3.2px;background:#0431fa;opacity:0.62"></div><div class="a" style="left:2232px;top:176px;width:12px;height:3.2px;background:#a31515;opacity:0.62"></div><div class="a" style="left:2244px;top:176px;width:2px;height:3.2px;background:#000000;opacity:0.62"></div><div class="a" style="left:2248px;top:176px;width:30px;height:3.2px;background:#a31515;opacity:0.62"></div><div class="a" style="left:2278px;top:176px;width:2px;height:3.2px;background:#0431fa;opacity:0.62"></div><div class="a" style="left:2282px;top:176px;width:2px;height:3.2px;background:#7b3814;opacity:0.62"></div><div class="a" style="left:2284px;top:176px;width:2px;height:3.2px;background:#319331;opacity:0.62"></div><div class="a" style="left:2176px;top:184px;width:2px;height:3.2px;background:#0431fa;opacity:0.62"></div><div class="a" style="left:2178px;top:184px;width:2px;height:3.2px;background:#000000;opacity:0.62"></div><div class="a" style="left:2176px;top:192px;width:14px;height:3.2px;background:#000000;opacity:0.62"></div><div class="a" style="left:2192px;top:192px;width:4px;height:3.2px;background:#0000ff;opacity:0.62"></div><div class="a" style="left:2198px;top:192px;width:2px;height:3.2px;background:#0431fa;opacity:0.62"></div><div class="a" style="left:2184px;top:200px;width:12px;height:3.2px;background:#0000ff;opacity:0.62"></div><div class="a" style="left:2192px;top:209px;width:20px;height:1.5px;background:#2f8024;opacity:0.7"></div><div class="a" style="left:2216px;top:208px;width:6px;height:3.2px;background:#2f8024;opacity:0.62"></div><div class="a" style="left:2192px;top:212px;width:4px;height:3.2px;background:#000000;opacity:0.62"></div><div class="a" style="left:2198px;top:212px;width:4px;height:3.2px;background:#0000ff;opacity:0.62"></div><div class="a" style="left:2204px;top:212px;width:24px;height:3.2px;background:#000000;opacity:0.62"></div><div class="a" style="left:2192px;top:221px;width:20px;height:1.5px;background:#2f8024;opacity:0.7"></div><div class="a" style="left:2214px;top:220px;width:8px;height:3.2px;background:#2f8024;opacity:0.62"></div><div class="a" style="left:2192px;top:224px;width:8px;height:3.2px;background:#0000ff;opacity:0.62"></div><div class="a" style="left:2202px;top:224px;width:4px;height:3.2px;background:#0000ff;opacity:0.62"></div><div class="a" style="left:2208px;top:224px;width:26px;height:3.2px;background:#000000;opacity:0.62"></div><div class="a" style="left:2184px;top:232px;width:8px;height:3.2px;background:#0000ff;opacity:0.62"></div><div class="a" style="left:2194px;top:232px;width:12px;height:3.2px;background:#000000;opacity:0.62"></div><div class="a" style="left:2176px;top:240px;width:2px;height:3.2px;background:#0431fa;opacity:0.62"></div><div class="a" style="left:2176px;top:248px;width:12px;height:3.2px;background:#0000ff;opacity:0.62"></div><div class="a" style="left:2190px;top:248px;width:2px;height:3.2px;background:#000000;opacity:0.62"></div><div class="a" style="left:2194px;top:248px;width:8px;height:3.2px;background:#0000ff;opacity:0.62"></div><div class="a" style="left:2204px;top:248px;width:14px;height:3.2px;background:#000000;opacity:0.62"></div>
<div class="a" style="left:486px;top:1000px;width:1934px;height:191px;background:#fff"></div>
<div class="a" style="left:510px;top:1014px;width:178px;height:64px;border:2px solid #8a8383;border-radius:12px;background:#fff;box-shadow:0 1px 2px rgba(0,0,0,0.06);"></div>
<svg style="left:528px;top:1032px;" width="28" height="28" viewBox="0 0 28 28" fill="none"><rect x="1" y="1" width="26" height="26" rx="3" stroke="#1c1a1a" stroke-width="2"/><rect x="1" y="1" width="26" height="6.5" fill="#1c1a1a"/><path d="M1 13h26M1 19.9h26M14 7v20" stroke="#1c1a1a" stroke-width="2"/></svg>
<div class="t med" style="left:573.50px;top:1033.99px;font-size:26px;color:#1c1a1a;letter-spacing:0.45px;">Preview</div>
<div class="a" style="left:704px;top:1014px;width:181px;height:64px;border:2px solid #8a8383;border-radius:12px;background:#fff;box-shadow:0 1px 2px rgba(0,0,0,0.06);"></div>
<svg style="left:722px;top:1036px;" width="29" height="22" viewBox="0 0 29 22" fill="none"><path d="M7 5.5L1.5 11L7 16.5M22 5.5L27.5 11L22 16.5M16.5 1.5L12.5 20.5" stroke="#1c1a1a" stroke-width="2"/></svg>
<div class="t med" style="left:766.50px;top:1033.99px;font-size:26px;color:#1c1a1a;letter-spacing:0.7px;">Compile</div>
<div class="a" style="left:901px;top:1014px;width:204px;height:64px;border:2px solid #8a8383;border-radius:12px;background:#fff;box-shadow:0 1px 2px rgba(0,0,0,0.06);"></div>
<div class="a" style="left:1041px;top:1015px;width:2px;height:62px;background:#8a8383"></div>
<svg style="left:912px;top:1026px;" width="40" height="40" viewBox="0 0 40 40" fill="none"><path d="M12.7 32.2L23 22.1C24.5 22.9 27 23 28.5 22.5C31.5 21.5 34.5 18.5 34.4 15C34.3 13.8 34 12.5 33.3 11.7L28.2 16.8C27 17.9 25 18.5 23.6 17.4C22.2 16.3 22.3 14.3 23.4 13L29.5 7C28 6.3 26.8 6.3 25.7 6.5C20.5 7.2 17.3 11.5 17.9 15.5C18 16.4 18.3 17.2 18.7 17.9L8.4 27.4C7.8 28 7.8 28.9 8.4 29.5L11.3 32.2C11.7 32.6 12.3 32.6 12.7 32.2Z" stroke="#1c1a1a" stroke-width="1.9" stroke-linejoin="round"/></svg>
<div class="t med" style="left:964.50px;top:1033.99px;font-size:26px;color:#1c1a1a;letter-spacing:0.3px;">Build</div>
<svg style="left:1065.5px;top:1041.5px;" width="16" height="10" viewBox="0 0 16 10" fill="none"><path d="M0.8 0.8L7.5 8.5L14.2 0.8" stroke="#2a2626" stroke-width="2"/></svg>
<div class="a" style="left:1121px;top:1014px;width:145px;height:64px;border:2px solid #8a8383;border-radius:12px;background:#fff;box-shadow:0 1px 2px rgba(0,0,0,0.06);"></div>
<div class="a" style="left:1202px;top:1015px;width:2px;height:62px;background:#8a8383"></div>
<div class="t med" style="left:1140.80px;top:1033.99px;font-size:26px;color:#1c1a1a;letter-spacing:0.5px;">Lint</div>
<svg style="left:1226.5px;top:1041.5px;" width="16" height="10" viewBox="0 0 16 10" fill="none"><path d="M0.8 0.8L7.5 8.5L14.2 0.8" stroke="#2a2626" stroke-width="2"/></svg>
<div class="a" style="left:1290px;top:1000px;width:2px;height:93px;background:#e6e3e3"></div>
<div class="t" style="left:1357.30px;top:1033.99px;font-size:26px;color:#1c1a1a;">Results</div>
<div class="t" style="left:1509.30px;top:1033.99px;font-size:26px;color:#1c1a1a;letter-spacing:0.5px;">Code quality</div>
<div class="t" style="left:1725.60px;top:1033.99px;font-size:26px;color:#1c1a1a;letter-spacing:0.55px;">Compiled code</div>
<div class="t" style="left:1971.90px;top:1033.99px;font-size:26px;color:#1c1a1a;letter-spacing:0.1px;">Lineage</div>
<div class="a" style="left:1939px;top:1090px;width:159px;height:4px;background:#928b8b"></div>
<div class="a" style="left:2140px;top:1110px;width:260px;height:63px;border:2px solid #8a8383;border-radius:12px;background:#fff;box-shadow:0 1px 2px rgba(0,0,0,0.06);"></div>
<svg style="left:2150px;top:1122px;" width="40" height="40" viewBox="0 0 40 40" fill="none"><defs><linearGradient id="cg" gradientUnits="userSpaceOnUse" x1="19" y1="20" x2="33" y2="20"><stop offset="0" stop-color="#e8601c"/><stop offset="1" stop-color="#5a2ee8"/></linearGradient></defs><g stroke="url(#cg)" stroke-width="1.8" fill="none" stroke-linecap="round" stroke-linejoin="round"><path d="M24.9 28.6C26.5 29.5 28.5 30.6 30.2 31.1C32.6 31.8 34.4 29.6 33.2 27.4C31.5 24.5 28.4 21.8 28.6 19.7C28.8 17.5 31.2 14.6 33.2 11.8C34.4 9.8 32.4 7.5 29.8 8.8C26.5 10.3 22.8 12 20.6 13C18.5 12 15.5 10.2 12.9 8.8C10.4 7.5 8.2 9.5 9.2 11.8C10.8 14.6 12.8 17.6 12.7 19.7C12.6 22 10.6 24.8 9.1 27.5C7.9 29.7 10.2 31.8 12.5 31C15 30 18 28 20.6 26.4"/><path d="M20.6 13C17.8 15 16.3 17.5 16.3 19.8C16.3 22.5 18 25 20.6 26.4"/><path d="M24.4 16.5C26.1 18.5 26.4 21.6 24.8 23.8C23.8 25.2 22.3 26 20.6 26.4"/></g><path d="M20.9 18.2L22.6 19.9L20.9 21.6L19.2 19.9Z" fill="#e8601c"/></svg>
<div class="t med" style="left:2201.20px;top:1129.99px;font-size:26px;color:#1c1a1a;letter-spacing:1.0px;">dbt Copilot</div>
<svg style="left:2360.5px;top:1137.5px;" width="16" height="10" viewBox="0 0 16 10" fill="none"><path d="M0.8 0.8L7.5 8.5L14.2 0.8" stroke="#2a2626" stroke-width="2"/></svg>
<div class="a" style="left:486px;top:1191px;width:1934px;height:2px;background:#e8e6e6"></div>
<div class="a" style="left:486px;top:1193px;width:1934px;height:205px;background:#f4f4f4"></div>
<svg style="left:0;top:0" width="2420" height="1476" viewBox="0 0 2420 1476"><defs><pattern id="dp" x="578.5" y="1194.9" width="29.73" height="29.75" patternUnits="userSpaceOnUse"><circle cx="14" cy="13.8" r="1.0" fill="#9b9696"/></pattern></defs><rect x="486" y="1193" width="1934" height="205" fill="url(#dp)"/></svg>
<svg style="left:0;top:0" width="2420" height="1476" viewBox="0 0 2420 1476"><path d="M994 1297.7H1119M1108 1287.5l10.5 10.2-10.5 10.2" stroke="#4f4a4a" stroke-width="2" fill="none"/><path d="M1453 1297.7H1594M1583 1287.5l10.5 10.2-10.5 10.2" stroke="#4f4a4a" stroke-width="2" fill="none"/><path d="M1880 1297.7H2041M2030 1287.5l10.5 10.2-10.5 10.2" stroke="#4f4a4a" stroke-width="2" fill="none"/></svg>
<div class="a" style="left:588px;top:1224px;width:406px;height:138px;border:1.6px solid #8c8585;border-radius:9px;background:#fff;box-shadow:0 1px 3px rgba(0,0,0,0.06)"></div>
<div class="a" style="left:616px;top:1260px;width:66px;height:66px;background:#b1f9ec;border-radius:9px"></div>
<svg style="left:638px;top:1270px;" width="22" height="24" viewBox="0 0 22 24" fill="none"><ellipse cx="11" cy="4.5" rx="9.5" ry="3.5" stroke="#1c1a1a" stroke-width="1.8"/><path d="M1.5 4.5v14.5c0 1.9 4.3 3.5 9.5 3.5s9.5-1.6 9.5-3.5V4.5M1.5 9.5c0 1.9 4.3 3.5 9.5 3.5s9.5-1.6 9.5-3.5M1.5 14.3c0 1.9 4.3 3.5 9.5 3.5s9.5-1.6 9.5-3.5" stroke="#1c1a1a" stroke-width="1.8"/></svg>
<div class="t" style="left:631.00px;top:1299.90px;font-size:21px;color:#1c1a1a;letter-spacing:-0.6px;font-family:'Liberation Mono',monospace;transform:scaleY(1.15);transform-origin:0 16.1px;">SRC</div>
<div class="t" style="left:709.30px;top:1280.55px;font-size:23.8px;color:#1c1a1a;letter-spacing:0.05px;">ecom.raw_customers</div>
<div class="a" style="left:1120px;top:1222.5px;width:333px;height:141px;border:3px solid #4a4545;border-radius:11px;background:#fff;box-shadow:0 8px 18px rgba(0,0,0,0.16)"></div>
<div class="a" style="left:1150px;top:1260px;width:66px;height:66px;background:#dbeafe;border-radius:9px"></div>
<svg style="left:1172px;top:1270px;" width="22" height="24" viewBox="0 0 22 24" fill="none"><path d="M11 1.5l9.2 5v10.5L11 22l-9.2-5V6.5z" stroke="#1c1a1a" stroke-width="1.8" stroke-linejoin="round"/><path d="M1.8 6.5L11 11.6l9.2-5.1M11 11.6V22" stroke="#1c1a1a" stroke-width="1.8" stroke-linejoin="round"/></svg>
<div class="t" style="left:1164.00px;top:1299.90px;font-size:21px;color:#1c1a1a;letter-spacing:-0.3px;font-family:'Liberation Mono',monospace;transform:scaleY(1.15);transform-origin:0 16.1px;">MDL</div>
<div class="t" style="left:1243.00px;top:1280.01px;font-size:24.2px;color:#1c1a1a;letter-spacing:0.05px;">stg_customers</div>
<div class="a" style="left:1595.5px;top:1224.5px;width:285px;height:137px;border:1.6px solid #8c8585;border-radius:9px;background:#fff;box-shadow:0 1px 3px rgba(0,0,0,0.06)"></div>
<div class="a" style="left:1623.5px;top:1260px;width:66px;height:66px;background:#dbeafe;border-radius:9px"></div>
<svg style="left:1645px;top:1270px;" width="22" height="24" viewBox="0 0 22 24" fill="none"><path d="M11 1.5l9.2 5v10.5L11 22l-9.2-5V6.5z" stroke="#1c1a1a" stroke-width="1.8" stroke-linejoin="round"/><path d="M1.8 6.5L11 11.6l9.2-5.1M11 11.6V22" stroke="#1c1a1a" stroke-width="1.8" stroke-linejoin="round"/></svg>
<div class="t" style="left:1637.50px;top:1299.90px;font-size:21px;color:#1c1a1a;letter-spacing:-0.3px;font-family:'Liberation Mono',monospace;transform:scaleY(1.15);transform-origin:0 16.1px;">MDL</div>
<div class="t" style="left:1716.70px;top:1280.55px;font-size:23.8px;color:#1c1a1a;letter-spacing:0.05px;">customers</div>
<div class="a" style="left:2042px;top:1224px;width:278px;height:137.5px;border:1.6px solid #8c8585;border-radius:9px;background:#fff;box-shadow:0 1px 3px rgba(0,0,0,0.06)"></div>
<div class="a" style="left:2070.5px;top:1260px;width:66px;height:66px;background:#f5b5c0;border-radius:9px"></div>
<div class="t" style="left:2084.00px;top:1299.90px;font-size:21px;color:#1c1a1a;letter-spacing:-0.3px;font-family:'Liberation Mono',monospace;transform:scaleY(1.15);transform-origin:0 16.1px;">SEM</div>
<svg style="left:2092px;top:1268px;" width="24" height="26" viewBox="0 0 24 26" fill="none"><circle cx="12" cy="5" r="3.5" stroke="#1c1a1a" stroke-width="1.8"/><circle cx="12" cy="19" r="3.5" stroke="#1c1a1a" stroke-width="1.8"/></svg>
<div class="t" style="left:2163.30px;top:1280.55px;font-size:23.8px;color:#1c1a1a;letter-spacing:0.05px;">customers</div>
<div class="a" style="left:1555px;top:1241px;width:612px;height:78px;background:rgba(255,255,255,0.86);border:2px solid #8c8585;border-radius:13px"></div>
<div class="a" style="left:1939.5px;top:1242px;width:2px;height:76px;background:#8c8585"></div>
<div class="t" style="left:1582.50px;top:1267.64px;font-size:26.3px;color:#2a2626;letter-spacing:0.55px;">2+stg_customers+2</div>
<div class="t med" style="left:1962.40px;top:1266.30px;font-size:28px;color:#2a2626;letter-spacing:0.45px;">Update Graph</div>
<div class="a" style="left:2200px;top:1240.5px;width:79px;height:78.5px;background:#fff;border:2px solid #8c8585;border-radius:13px"></div>
<svg style="left:2224px;top:1264px;" width="33" height="33" viewBox="0 0 33 33" fill="none"><path d="M1 9V1h9M23 1h9v8M32 24v8h-9M10 32H1v-8" stroke="#1c1a1a" stroke-width="2.6" stroke-linecap="round" stroke-linejoin="round"/></svg>
<div class="a" style="left:2296px;top:1240.5px;width:79px;height:78.5px;background:#fff;border:2px solid #8c8585;border-radius:13px"></div>
<svg style="left:2316px;top:1262px;" width="40" height="40" viewBox="0 0 40 40" fill="none"><path d="M31.2 21.5A12.3 12.3 0 1 1 19 7.9H30.8M25.2 2.4L30.9 7.9L25.2 13.6" stroke="#1c1a1a" stroke-width="2.1" stroke-linecap="butt" stroke-linejoin="miter"/></svg>
<div class="a" style="left:0px;top:1398px;width:2420px;height:2px;background:#e2dfdf"></div>
<div class="a" style="left:0px;top:1400px;width:2420px;height:76px;background:linear-gradient(#fefefe,#e9e9e9)"></div>
<svg style="left:28px;top:1433px;" width="16" height="10" viewBox="0 0 16 10" fill="none"><path d="M1 9L8 1.5L15 9" stroke="#3a3535" stroke-width="2"/></svg>
<div class="a" style="left:74px;top:1400px;width:2px;height:76px;background:#e0dddd"></div>
<div class="a" style="left:83px;top:1402px;width:1550px;height:76px;border:1px solid #f1f0f0;border-radius:12px;border-bottom:none"></div>
<div class="t" style="left:109.00px;top:1426.85px;font-size:26.4px;color:#676161;letter-spacing:0.75px;">dbt build --select &lt;model_name&gt;</div>
<div class="a" style="left:1646.5px;top:1405px;width:524px;height:64.5px;border:5px solid #e63f21"></div>
<div class="a" style="left:1658px;top:1419px;width:80px;height:40px;background:#5b3cf0;border-radius:20px"></div>
<div class="a" style="left:1704px;top:1425px;width:28.5px;height:28.5px;background:#fff;border-radius:50%;box-shadow:0 1px 2px rgba(0,0,0,0.2)"></div>
<svg style="left:1675px;top:1432px;" width="20" height="14" viewBox="0 0 20 14" fill="none"><path d="M1 7l5.5 5.5L19 1" stroke="#fff" stroke-width="2"/></svg>
<div class="t med" style="left:1763.50px;top:1425.49px;font-size:27.3px;color:#4a4545;letter-spacing:1.37px;">Defer to staging/production</div>
<svg style="left:2135px;top:1425px;" width="24" height="24" viewBox="0 0 24 24" fill="none"><circle cx="12" cy="12" r="11" stroke="#6b6565" stroke-width="1.6"/><path d="M8.5 9.2a3.5 3.5 0 1 1 5.2 3.1c-1 0.6-1.7 1.2-1.7 2.6v0.6" stroke="#6b6565" stroke-width="1.6"/><circle cx="12" cy="18" r="1" fill="#6b6565"/></svg>
<div class="a" style="left:2183px;top:1415px;width:141px;height:48px;background:linear-gradient(#c6f7cc,#b9eec0);border-radius:11px"></div>
<svg style="left:2195px;top:1425px;" width="28" height="28" viewBox="0 0 28 28" fill="none"><circle cx="14" cy="14" r="12.8" stroke="#1c1a1a" stroke-width="2"/></svg>
<div class="t med" style="left:2236.90px;top:1426.79px;font-size:26px;color:#1c1a1a;">Ready</div>
<div class="a" style="left:2340px;top:1407px;width:68px;height:63px;background:#fff;border:2px solid #8c8585;border-radius:12px"></div>
<svg style="left:2360px;top:1435px;" width="28" height="8" viewBox="0 0 28 8" fill="none"><circle cx="4" cy="4" r="3.3" fill="#1c1a1a"/><circle cx="14" cy="4" r="3.3" fill="#1c1a1a"/><circle cx="24" cy="4" r="3.3" fill="#1c1a1a"/></svg>
<div class="a" style="left:2412px;top:1468px;width:8px;height:8px;background:radial-gradient(circle at 0 0,transparent 7.5px,#000 8.2px)"></div>
</body></html>
